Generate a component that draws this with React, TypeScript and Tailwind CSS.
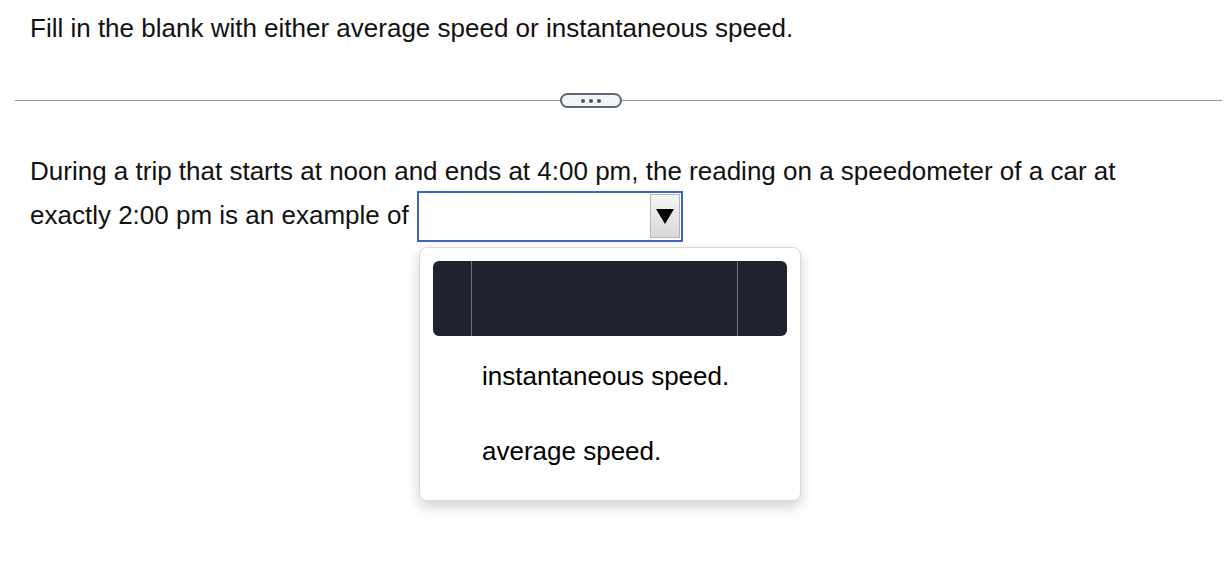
import React from 'react'

const font = { fontFamily: '"Liberation Sans", Arial, sans-serif' }

function Divider() {
  return (
    <div className="flex items-center pl-[15px] pr-[4px] mt-[50px]">
      <div className="w-[545px] h-px bg-[#8c95a1]" />
      <div className="w-[62px] h-[15px] rounded-full border-2 border-[#5d6875] bg-[#f3f4f6] flex items-center justify-center gap-[4px]">
        <span className="w-[4px] h-[4px] rounded-full bg-[#4b5563]" />
        <span className="w-[4px] h-[4px] rounded-full bg-[#4b5563]" />
        <span className="w-[4px] h-[4px] rounded-full bg-[#4b5563]" />
      </div>
      <div className="flex-1 h-px bg-[#8c95a1]" />
    </div>
  )
}

function SelectBox() {
  return (
    <span className="relative inline-block align-middle w-[266px] h-[51px] border-2 border-[#3d66c4] bg-white ml-[8px] -mt-[2px]">
      <span className="absolute right-[1px] top-[1px] w-[30px] h-[44px] bg-gradient-to-b from-[#f4f4f4] to-[#d9d9d9] border border-[#b5b5b5] flex items-center justify-center">
        <svg width="20" height="18" viewBox="0 0 20 18">
          <polygon points="1,2 19,2 10,17" fill="#000" />
        </svg>
      </span>
    </span>
  )
}

function Dropdown() {
  const options = ['instantaneous speed.', 'average speed.']
  return (
    <div className="ml-[419px] mt-[5px] w-[382px] h-[254px] bg-white rounded-[8px] border border-[#d9d9d9] shadow-[0_6px_14px_rgba(0,0,0,0.18)] p-[13px]">
      <div className="h-[75px] bg-[#1f2330] rounded-[6px] flex">
        <div className="w-[39px] border-r border-[#6b7280]" />
        <div className="flex-1 border-r border-[#6b7280]" />
        <div className="w-[49px]" />
      </div>
      <div className="flex flex-col pt-[3px]">
        {options.map((opt) => (
          <div key={opt} className="h-[75px] flex items-center pl-[49px] text-[26px] text-black">
            {opt}
          </div>
        ))}
      </div>
    </div>
  )
}

export default function App() {
  return (
    <div className="w-[1226px] h-[586px] bg-white overflow-hidden text-[#111]" style={font}>
      <div className="pl-[30px] pt-[13px] text-[26px] leading-[30px]">
        Fill in the blank with either average speed or instantaneous speed.
      </div>
      <Divider />
      <div className="pl-[30px] mt-[42px] text-[26px] leading-[43px] w-[1160px]">
        During a trip that starts at noon and ends at 4:00 pm, the reading on a speedometer of a car at
        exactly 2:00 pm is an example of
        <SelectBox />
      </div>
      <Dropdown />
    </div>
  )
}
